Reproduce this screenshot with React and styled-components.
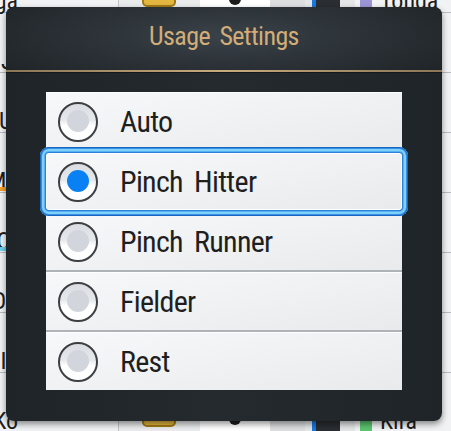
import React, { useState } from "react";
import styled, { createGlobalStyle, css } from "styled-components";

const GlobalStyle = createGlobalStyle`
  html, body {
    margin: 0;
    padding: 0;
    width: 451px;
    height: 431px;
    overflow: hidden;
    background: #e4e6e8;
  }
  * {
    box-sizing: border-box;
  }
`;

const FONT = `"Roboto Condensed", "Liberation Sans Narrow", "DejaVu Sans Condensed", Roboto, sans-serif`;

// Background roster (mostly hidden behind the dialog)
const rosterRows = [
  { name: "Noga", color: "#9b95d6", label: "Tonga" },
  { name: "Ji", color: "#9b95d6", label: "Wa" },
  { name: "Ui", color: "#9b95d6", label: "ma" },
  { name: "Mu", color: "#9b95d6", label: "na", bar: "#f0a030" },
  { name: "Ot", color: "#9b95d6", label: "in", bar: "#6fd0ee" },
  { name: "Op", color: "#9b95d6", label: "a" },
  { name: "In", color: "#9b95d6", label: "oy" },
  { name: "Ko", color: "#5cc46e", label: "Kıra" },
];

const options = ["Auto", "Pinch Hitter", "Pinch Runner", "Fielder", "Rest"];

function App() {
  const [selected, setSelected] = useState("Pinch Hitter");

  return (
    <Screen>
      <GlobalStyle />
      <Roster>
        {rosterRows.map((row, i) => (
          <RosterRow key={i}>
            <NameCell $bar={row.bar}>{row.name}</NameCell>
            <BadgeCell>
              <Badge />
            </BadgeCell>
            <DotCell>
              <Dot />
            </DotCell>
            <GrayCell />
            <BarCell>
              <BlueBar />
              <DarkBar />
            </BarCell>
            <LabelCell>
              <Swatch $color={row.color} />
              <span>{row.label}</span>
            </LabelCell>
          </RosterRow>
        ))}
      </Roster>

      <Dialog>
        <Header>
          <Title>Usage Settings</Title>
        </Header>
        <GoldRule />
        <Body>
          <OptionList>
            {options.map((opt) => (
              <Option key={opt} $active={selected === opt} onClick={() => setSelected(opt)}>
                <Radio $checked={selected === opt} />
                <OptionLabel>{opt}</OptionLabel>
              </Option>
            ))}
          </OptionList>
        </Body>
      </Dialog>
    </Screen>
  );
}

const Screen = styled.div`
  position: relative;
  width: 451px;
  height: 431px;
  overflow: hidden;
  font-family: ${FONT};
`;

const Roster = styled.div`
  display: flex;
  flex-direction: column;
  margin-top: -47px;
`;

const RosterRow = styled.div`
  display: grid;
  grid-template-columns: 119px 81px 70px 35px 50px 1fr;
  height: 60px;
  background: #f1f2f3;
  border-bottom: 1px solid #b9bcbf;
  box-shadow: 0 5px 0 -4px #c9cccf;
`;

const NameCell = styled.div`
  display: flex;
  align-items: flex-end;
  justify-content: flex-end;
  padding: 0 100px 0 0;
  font-size: 24px;
  line-height: 1;
  color: #1d1d1d;
  border-right: 1px solid #c2c5c8;
  position: relative;
  ${({ $bar }) =>
    $bar &&
    css`
      &::after {
        content: "";
        position: absolute;
        left: 0;
        right: 0;
        bottom: 2px;
        height: 4px;
        background: ${$bar};
      }
    `}
`;

const BadgeCell = styled.div`
  display: flex;
  align-items: flex-end;
  padding: 0 0 6px 23px;
  background: #e9ebec;
`;

const Badge = styled.div`
  width: 34px;
  height: 28px;
  border-radius: 5px;
  border: 2px solid #a27a12;
  background: #e3b640;
`;

const DotCell = styled.div`
  display: flex;
  align-items: flex-end;
  justify-content: center;
  padding-bottom: 8px;
  background: #ffffff;
`;

const Dot = styled.div`
  width: 12px;
  height: 12px;
  border-radius: 50%;
  background: #1c1c1c;
`;

const GrayCell = styled.div`
  background: #dcdee0;
`;

const BarCell = styled.div`
  display: flex;
  padding-left: 7px;
  background: #e4e6e8;
`;

const BlueBar = styled.div`
  width: 4px;
  background: #1877e0;
`;

const DarkBar = styled.div`
  width: 24px;
  background: #2a2d31;
`;

const LabelCell = styled.div`
  display: flex;
  align-items: flex-end;
  gap: 8px;
  padding-left: 5px;
  font-size: 24px;
  line-height: 1;
  color: #1d1d1d;
  white-space: nowrap;
`;

const Swatch = styled.div`
  width: 12px;
  height: 60px;
  background: ${({ $color }) => $color};
`;

const Dialog = styled.div`
  position: absolute;
  left: 6px;
  top: 7px;
  width: 436px;
  height: 414px;
  border-radius: 8px;
  overflow: hidden;
  background: linear-gradient(90deg, #1f2428 0%, #252a2e 50%, #1f2428 100%);
  box-shadow: 0 3px 6px rgba(0, 0, 0, 0.45);
  display: flex;
  flex-direction: column;
`;

const Header = styled.div`
  height: 63px;
  padding-bottom: 5px;
  display: flex;
  align-items: center;
  justify-content: center;
  background: radial-gradient(ellipse 65% 100% at 50% 45%, #3a4249 0%, #2b3136 50%, #1e2327 100%);
`;

const Title = styled.h1`
  margin: 0;
  font-family: ${FONT};
  font-weight: 400;
  font-size: 26px;
  letter-spacing: -0.6px;
  word-spacing: 4px;
  color: #d2ad78;
`;

const GoldRule = styled.div`
  height: 2px;
  background: linear-gradient(90deg, #8b7656 0%, #c9aa7c 50%, #8b7656 100%);
  box-shadow: 0 1px 0 #15181b;
`;

const Body = styled.div`
  flex: 1;
  padding: 20px 40px 0;
`;

const OptionList = styled.div`
  display: flex;
  flex-direction: column;
  gap: 2px;
  background: #aeb3b8;
`;

const Option = styled.div`
  position: relative;
  height: 58px;
  display: flex;
  align-items: center;
  gap: 22px;
  padding-left: 12px;
  background: linear-gradient(170deg, #f7f8f9 0%, #eef0f2 60%, #e8eaec 100%);
  border-top: 1px solid #ffffff;
  cursor: pointer;

  ${({ $active }) =>
    $active &&
    css`
      border-radius: 3px;
      box-shadow: inset 0 0 0 1px #ffffff;
      &::before {
        content: "";
        position: absolute;
        inset: -6px;
        z-index: 2;
        border-radius: 9px;
        pointer-events: none;
        box-shadow: inset 0 0 0 1px #1a64c2, inset 0 0 0 2px #3890e2, inset 0 0 0 4px #7ed1fa,
          inset 0 0 0 5px #59aff0, inset 0 0 0 6px #2a80da;
      }
    `}
`;

const Radio = styled.span`
  position: relative;
  flex: none;
  width: 40px;
  height: 40px;
  border-radius: 50%;
  border: 2px solid #3d3f42;
  background: linear-gradient(180deg, #d9dde2 0%, #e6e9ec 45%, #ffffff 60%);

  &::after {
    content: "";
    position: absolute;
    left: 50%;
    top: 50%;
    width: 22px;
    height: 22px;
    margin: -12px 0 0 -11px;
    border-radius: 50%;
    background: ${({ $checked }) => ($checked ? "#0a80f5" : "#d2d6dc")};
  }
`;

const OptionLabel = styled.span`
  font-size: 30px;
  letter-spacing: -0.7px;
  word-spacing: 5px;
  color: #1f1f1f;
  line-height: 1;
`;

export default App;
